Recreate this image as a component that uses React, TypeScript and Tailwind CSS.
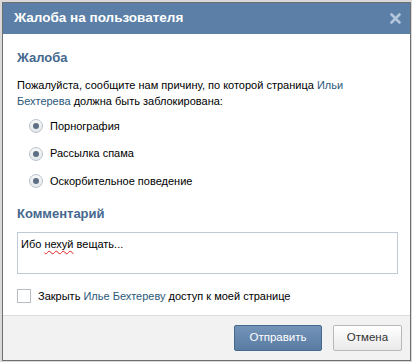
import React from 'react';

const reasons = ['Порнография', 'Рассылка спама', 'Оскорбительное поведение'];

function Radio() {
  return (
    <span className="relative flex h-[14px] w-[14px] items-center justify-center rounded-full border border-[#b9c3cd] bg-gradient-to-b from-[#f7f7f7] to-[#e4e8ec]">
      <span className="h-[6px] w-[6px] rounded-full bg-[#5c6f84]" />
    </span>
  );
}

export default function App() {
  return (
    <div className="h-[362px] w-[412px] bg-[#d9d9d9] pl-[2px] pr-[1px] pt-[2px]" style={{ fontFamily: '"Liberation Sans", Tahoma, Arial, sans-serif' }}>
      <div className="flex h-[359px] w-[409px] flex-col border border-[#6f6f6f] bg-white">
        {/* Header */}
        <div className="flex h-[31px] items-center justify-between bg-[#5b7fa7] pl-[11px] pr-[8px]">
          <span className="text-[13.5px] font-bold text-white">Жалоба на пользователя</span>
          <span className="flex h-[14px] w-[14px] items-center justify-center">
            <svg width="11" height="11" viewBox="0 0 11 11">
              <path d="M1.5 1.5 L9.5 9.5 M9.5 1.5 L1.5 9.5" stroke="#b3c6dc" strokeWidth="2.6" strokeLinecap="round" />
            </svg>
          </span>
        </div>

        {/* Body */}
        <div className="flex flex-1 flex-col px-[14px] pt-[16px] text-[11px] text-black">
          <h2 className="text-[13px] font-bold leading-[16px] text-[#45688e]">Жалоба</h2>
          <p className="mt-[11px] leading-[16px]">
            Пожалуйста, сообщите нам причину, по которой страница <span className="text-[#2b587a]">Ильи</span>
            <br />
            <span className="text-[#2b587a]">Бехтерева</span> должна быть заблокирована:
          </p>

          <div className="mt-[10px] flex flex-col gap-[13.5px] pl-[12px]">
            {reasons.map((r) => (
              <label key={r} className="flex h-[14px] items-center gap-[7px]">
                <Radio />
                <span>{r}</span>
              </label>
            ))}
          </div>

          <h2 className="mt-[18px] text-[13px] font-bold leading-[16px] text-[#45688e]">Комментарий</h2>
          <div className="mt-[10px] h-[42px] w-[381px] border border-[#c0cad5] px-[3px] pt-[3px]">
            Ибо <span className="underline decoration-[#e02020] decoration-wavy decoration-1 underline-offset-2">нехуй</span> вещать...
          </div>

          <label className="mt-[14px] flex items-center gap-[7px]">
            <span className="h-[14px] w-[14px] border border-[#b5bcc4] bg-white" />
            <span>
              Закрыть <span className="text-[#2b587a]">Илье Бехтереву</span> доступ к моей странице
            </span>
          </label>
        </div>

        {/* Footer */}
        <div className="flex h-[45px] items-center justify-end gap-[11px] border-t border-[#dcdcdc] bg-[#f2f2f2] pr-[8px]">
          <button className="h-[26px] w-[88px] rounded-[2px] border border-[#45688e] bg-gradient-to-b from-[#7393b8] to-[#5a7ca3] text-[11.5px] text-white">
            Отправить
          </button>
          <button className="h-[26px] w-[69px] rounded-[2px] border border-[#b8b8b8] bg-gradient-to-b from-[#ffffff] to-[#e9e9e9] text-[11.5px] text-[#333]">
            Отмена
          </button>
        </div>
      </div>
    </div>
  );
}
